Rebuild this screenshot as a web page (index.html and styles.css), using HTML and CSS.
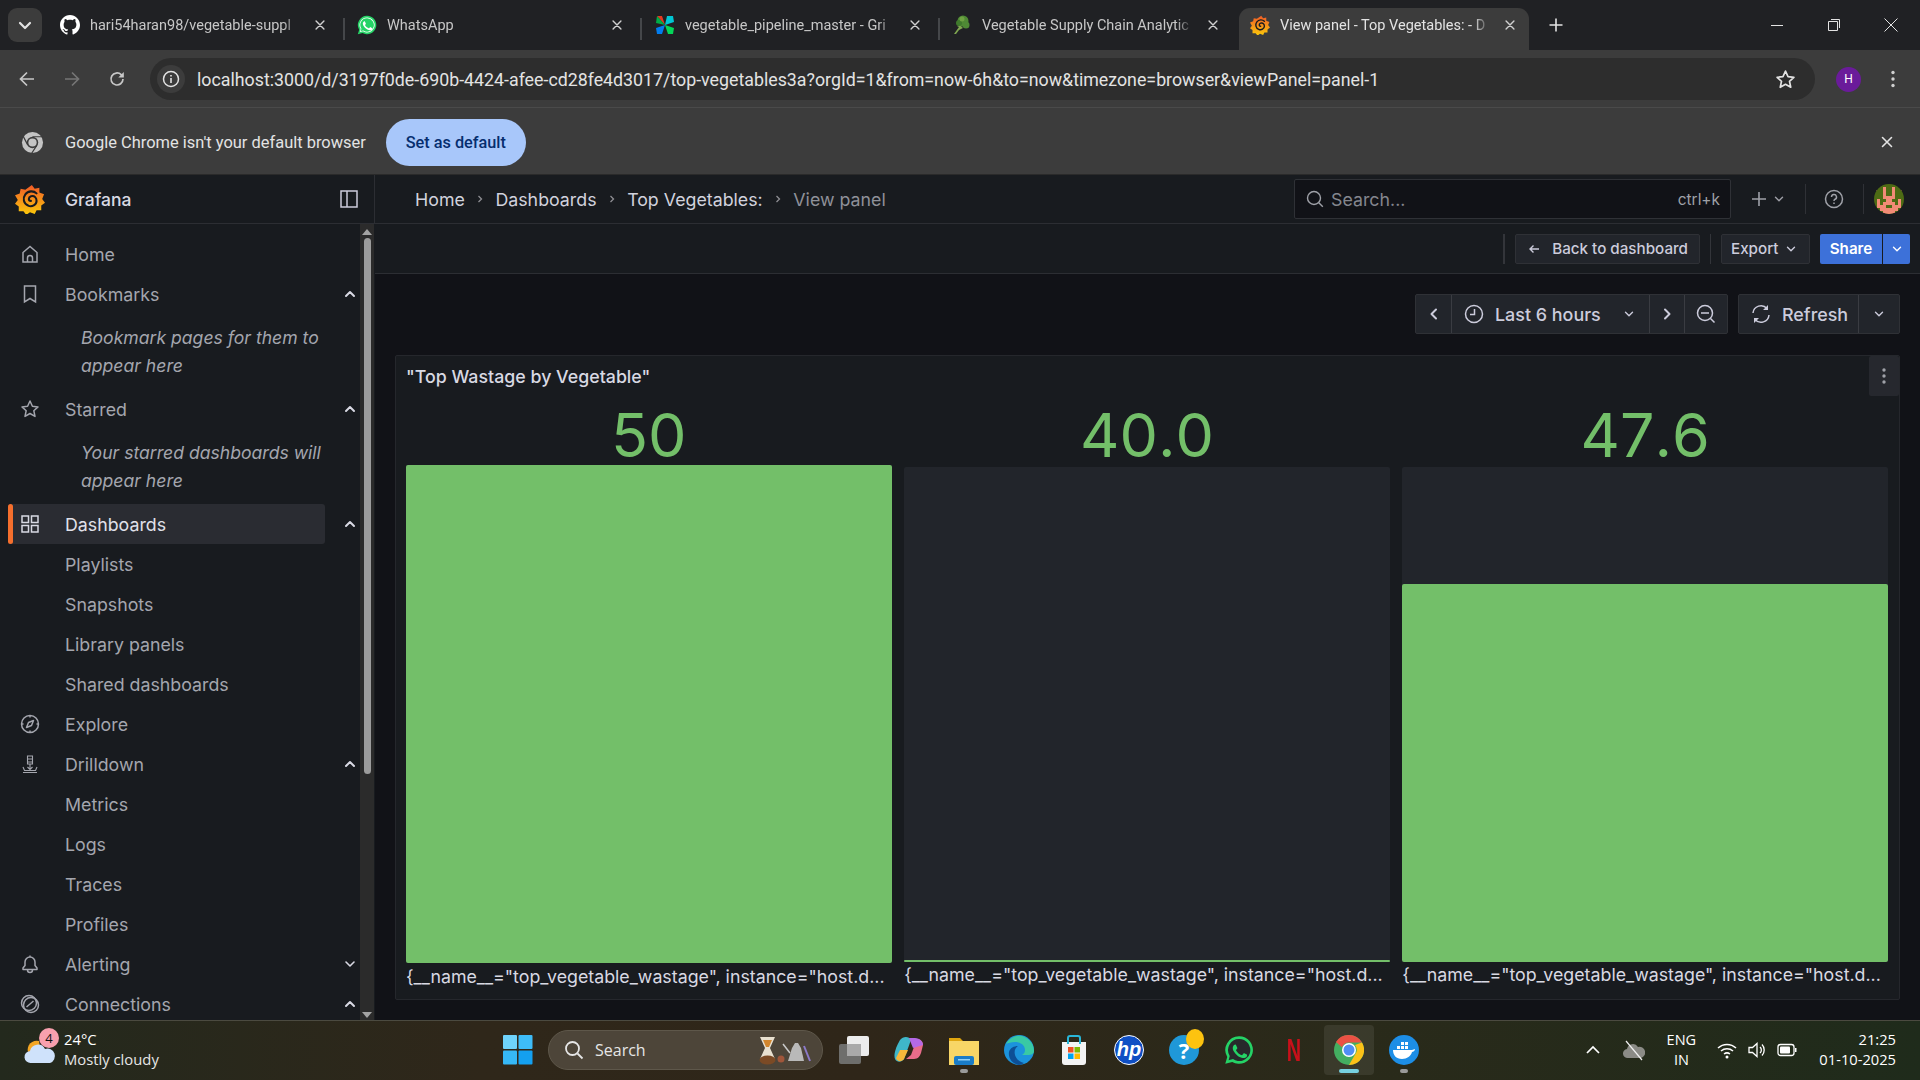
FILE: index.html
```html
<!DOCTYPE html>
<html lang="en">
  <head>
    <meta charset="UTF-8" />
    <title>View panel - Top Vegetables</title>
    <link rel="stylesheet" href="styles.css">
  </head>
  <body>
    <svg class="defs" width="0" height="0">
      <defs>
        <linearGradient id="gf" x1="0" y1="0" x2="0" y2="1">
          <stop offset="0" stop-color="#f05a28" />
          <stop offset="1" stop-color="#fbca0a" />
        </linearGradient>
        <symbol id="grafana" viewBox="0 0 32 32">
          <path fill="url(#gf)" d="M18 1l3 4 5-1 0 5 5 2-2 5 3 4-4 3 0 5-5 0-2 4-5-2-4 3-3-4-5 0 0-5-4-3 3-4-3-5 5-2 1-5 5 1z" />
          <path fill="none" stroke="#181b1f" stroke-width="2.2" stroke-linecap="round" d="M23 10c-3-3-9-3-12 1-3 4-2 10 3 12 4 2 9-1 9-5 0-3-2-6-6-5-3 1-3 5 0 5" />
        </symbol>
        <symbol id="chev-up" viewBox="0 0 16 16">
          <path fill="none" stroke="currentColor" stroke-width="2" stroke-linecap="round" stroke-linejoin="round" d="M4 10l4-4 4 4" />
        </symbol>
        <symbol id="chev-down" viewBox="0 0 16 16">
          <path fill="none" stroke="currentColor" stroke-width="1.6" stroke-linecap="round" stroke-linejoin="round" d="M4 6l4 4 4-4" />
        </symbol>
        <symbol id="x" viewBox="0 0 16 16">
          <path fill="none" stroke="currentColor" stroke-width="1.6" stroke-linecap="round" d="M3.5 3.5l9 9M12.5 3.5l-9 9" />
        </symbol>
      </defs>
    </svg>

    <div class="tabstrip">
      <div class="tab-search">
        <svg class="ic12" viewBox="0 0 16 16"><path fill="none" stroke="#e3e3e3" stroke-width="2.2" stroke-linecap="round" stroke-linejoin="round" d="M3 6l5 5 5-5" /></svg>
      </div>
      <div class="tab tab-github">
        <svg class="favicon" viewBox="0 0 16 16"><path fill="#fff" d="M8 0C3.6 0 0 3.6 0 8c0 3.5 2.3 6.5 5.5 7.6.4.1.5-.2.5-.4v-1.4c-2.2.5-2.7-1-2.7-1-.4-.9-.9-1.2-.9-1.2-.7-.5.1-.5.1-.5.8.1 1.2.8 1.2.8.7 1.2 1.9.9 2.3.7.1-.5.3-.9.5-1.1-1.8-.2-3.6-.9-3.6-4 0-.9.3-1.6.8-2.1-.1-.2-.4-1 .1-2.1 0 0 .7-.2 2.2.8.6-.2 1.3-.3 2-.3s1.4.1 2 .3c1.5-1 2.2-.8 2.2-.8.4 1.1.2 1.9.1 2.1.5.6.8 1.3.8 2.1 0 3.1-1.9 3.7-3.7 3.9.3.3.6.8.6 1.5v2.2c0 .2.1.5.6.4C13.7 14.5 16 11.5 16 8c0-4.4-3.6-8-8-8z" /></svg>
        <span class="tab-title">hari54haran98/vegetable-suppl</span>
        <svg class="tab-close"><use href="#x" /></svg>
      </div>
      <i class="tab-sep"></i>
      <div class="tab tab-whatsapp">
        <svg class="favicon" viewBox="0 0 24 24"><path fill="#25d366" d="M12 1a11 11 0 0 0-9.400 16.600L1 23l5.600-1.500A11 11 0 1 0 12 1z" /><path fill="#fff" d="M12 3a9 9 0 0 0-7.600 13.800l-1 3.700 3.800-1A9 9 0 1 0 12 3z" /><path fill="#25d366" d="M12 4a8 8 0 0 0-6.700 12.400l-.7 2.900 3-.8A8 8 0 1 0 12 4z" /><path fill="#fff" d="M9 7.500c-.3 0-.7.100-1 .5-.4.500-1 1.200-1 2.500s1 2.800 1.200 3c.200.200 2 3.100 4.800 4.200 2.400.900 2.900.700 3.400.700s1.700-.700 1.900-1.400c.200-.600.200-1.200.100-1.300-.300-.200-1.800-1-2.100-1.100-.300-.100-.500-.200-.700.100l-1 1.200c-.200.200-.400.300-.700.100-.300-.200-1.300-.500-2.500-1.500-.900-.800-1.500-1.800-1.700-2.100-.200-.300 0-.500.100-.600l.800-1.100c.100-.200.100-.400 0-.500l-1-2.200c-.200-.500-.500-.500-.8-.500z" /></svg>
        <span class="tab-title">WhatsApp</span>
        <svg class="tab-close"><use href="#x" /></svg>
      </div>
      <i class="tab-sep"></i>
      <div class="tab tab-airflow">
        <svg class="favicon" viewBox="0 0 20 20"><path fill="#e43921" d="M10 10L2 1l5 0z" /><path fill="#00ad46" d="M10 10L2 1 1 8z" /><path fill="#017cee" d="M10 10L2 19l5 0zM10 10l-8 9-1-6z" /><path fill="#00c7d4" d="M10 10l8-9-6 0zM10 10l8-9 1 6z" /><path fill="#04d659" d="M10 10l8 9-5 0zM10 10l8 9 1-6z" /></svg>
        <span class="tab-title">vegetable_pipeline_master - Gri</span>
        <svg class="tab-close"><use href="#x" /></svg>
      </div>
      <i class="tab-sep"></i>
      <div class="tab tab-veg">
        <svg class="favicon" viewBox="0 0 20 20"><path fill="#7fa650" d="M2 19l5-7-2-1 3-1 3 3-4 2-3 4z" /><circle cx="11" cy="6" r="5.500" fill="#4f8a35" /><circle cx="7" cy="8" r="3" fill="#3f7a2c" /><circle cx="14" cy="10" r="3.500" fill="#4f8a35" /><circle cx="10" cy="4" r="2.500" fill="#6ea243" /></svg>
        <span class="tab-title">Vegetable Supply Chain Analytic</span>
        <svg class="tab-close"><use href="#x" /></svg>
      </div>
      <div class="tab tab-active">
        <svg class="favicon"><use href="#grafana" /></svg>
        <span class="tab-title">View panel - Top Vegetables: - D</span>
        <svg class="tab-close"><use href="#x" /></svg>
      </div>
      <svg class="new-tab" viewBox="0 0 16 16"><path fill="none" stroke="#e3e3e3" stroke-width="1.600" d="M8 1.500v13M1.500 8h13" /></svg>
      <div class="window-btns">
        <svg class="win-btn" viewBox="0 0 16 16"><path stroke="#e3e3e3" d="M2 8.500h12" /></svg>
        <svg class="win-btn" viewBox="0 0 16 16"><path fill="none" stroke="#e3e3e3" d="M2.500 4.500h9v9h-9zM5 2.500h8.500v8.500" /></svg>
        <svg class="win-btn" viewBox="0 0 16 16"><path stroke="#e3e3e3" d="M1.500 1.500l13 13M14.500 1.500l-13 13" /></svg>
      </div>
    </div>

    <div class="toolbar">
      <svg class="nav-ic" viewBox="0 0 20 20"><path fill="none" stroke="#c7c7c7" stroke-width="1.700" d="M17 10H4M10 3.500L3.500 10l6.500 6.500" /></svg>
      <svg class="nav-ic" viewBox="0 0 20 20"><path fill="none" stroke="#757575" stroke-width="1.700" d="M3 10h13M10 3.500l6.500 6.500-6.500 6.500" /></svg>
      <svg class="nav-ic" viewBox="0 0 20 20"><path fill="none" stroke="#c7c7c7" stroke-width="1.700" d="M16 10a6 6 0 1 1-1.800-4.300L16 7.500" /><path fill="#c7c7c7" d="M16.800 3v5.500h-5.500z" /></svg>
      <div class="omnibox">
        <span class="site-info">
          <svg class="ic18" viewBox="0 0 18 18"><circle cx="9" cy="9" r="7.500" fill="none" stroke="#e3e3e3" stroke-width="1.500" /><path stroke="#e3e3e3" stroke-width="1.600" d="M9 8v5M9 5v1.600" /></svg>
        </span>
        <span class="url">localhost:3000/d/3197f0de-690b-4424-afee-cd28fe4d3017/top-vegetables3a?orgId=1&amp;from=now-6h&amp;to=now&amp;timezone=browser&amp;viewPanel=panel-1</span>
        <svg class="star" viewBox="0 0 20 20"><path fill="none" stroke="#e3e3e3" stroke-width="1.600" stroke-linejoin="round" d="M10 2l2.400 5.300 5.600.6-4.200 3.800 1.200 5.700-5-2.900-5 2.900 1.200-5.700L2 7.900l5.600-.6z" /></svg>
      </div>
      <span class="profile">H</span>
      <svg class="kebab" viewBox="0 0 4 18"><circle cx="2" cy="2.500" r="1.700" fill="#d0d0d0" /><circle cx="2" cy="9" r="1.700" fill="#d0d0d0" /><circle cx="2" cy="15.500" r="1.700" fill="#d0d0d0" /></svg>
    </div>

    <div class="infobar">
      <svg class="chrome-mono" viewBox="0 0 24 24"><circle cx="12" cy="12" r="11" fill="#c4c4c4" /><circle cx="12" cy="12" r="6" fill="#3c3c3c" /><circle cx="12" cy="12" r="4.300" fill="#c4c4c4" /><path stroke="#3c3c3c" stroke-width="1.300" d="M12 6h10.500M7 14.500L2 5M16.500 15l-5.500 8.500" /></svg>
      <span class="info-text">Google Chrome isn't your default browser</span>
      <span class="set-default">Set as default</span>
      <svg class="info-close"><use href="#x" /></svg>
    </div>

    <div class="app">
      <aside class="sidebar">
        <div class="brand">
          <svg class="logo"><use href="#grafana" /></svg>
          <span class="brand-name">Grafana</span>
          <svg class="dock" viewBox="0 0 18 18"><path fill="none" stroke="#ccccdc" stroke-width="1.500" d="M1 1h16v16H1zM7 1v16" /></svg>
        </div>
        <div class="nav-wrap">
          <nav class="nav">
            <a class="nav-row">
              <svg class="nav-icon" viewBox="0 0 20 20"><path d="M3 18V8.500L10 2.500l7 6V18zM7.500 18v-4a2.500 2.500 0 0 1 5 0v4" /></svg>
              <span>Home</span>
            </a>
            <a class="nav-row">
              <svg class="nav-icon" viewBox="0 0 20 20"><path d="M4.500 2h11v16L10 14.500 4.500 18z" /></svg>
              <span>Bookmarks</span>
              <svg class="nav-chev"><use href="#chev-up" /></svg>
            </a>
            <p class="nav-note">Bookmark pages for them to appear here</p>
            <a class="nav-row">
              <svg class="nav-icon" viewBox="0 0 20 20"><path stroke-linejoin="round" d="M10 2l2.400 5.300 5.600.6-4.200 3.800 1.200 5.700-5-2.900-5 2.900 1.200-5.700L2 7.900l5.600-.6z" /></svg>
              <span>Starred</span>
              <svg class="nav-chev"><use href="#chev-up" /></svg>
            </a>
            <p class="nav-note">Your starred dashboards will appear here</p>
            <a class="nav-row nav-active">
              <svg class="nav-icon" viewBox="0 0 20 20"><path d="M2 2h6.500v6.500H2zM11.500 2H18v6.500h-6.500zM2 11.500h6.500V18H2zM11.500 11.500H18V18h-6.500z" /></svg>
              <span>Dashboards</span>
              <svg class="nav-chev"><use href="#chev-up" /></svg>
            </a>
            <a class="nav-row nav-sub"><span>Playlists</span></a>
            <a class="nav-row nav-sub"><span>Snapshots</span></a>
            <a class="nav-row nav-sub"><span>Library panels</span></a>
            <a class="nav-row nav-sub"><span>Shared dashboards</span></a>
            <a class="nav-row">
              <svg class="nav-icon" viewBox="0 0 20 20"><circle cx="10" cy="10" r="8.500" /><path stroke-linejoin="round" d="M13.500 6.500l-2 5-5 2 2-5z" /><path d="M10 1.500v2M10 16.500v2M1.500 10h2M16.500 10h2" /></svg>
              <span>Explore</span>
            </a>
            <a class="nav-row">
              <svg class="nav-icon nav-icon-thin" viewBox="0 0 20 20"><path d="M7.500 2h5v8h-5zM7.500 5h5M7.500 8h5M10 10v5M7.500 13l2.500 2.500 2.500-2.500M3 13l1.500 3.500h11L17 13M3 18.500h14" /></svg>
              <span>Drilldown</span>
              <svg class="nav-chev"><use href="#chev-up" /></svg>
            </a>
            <a class="nav-row nav-sub"><span>Metrics</span></a>
            <a class="nav-row nav-sub"><span>Logs</span></a>
            <a class="nav-row nav-sub"><span>Traces</span></a>
            <a class="nav-row nav-sub"><span>Profiles</span></a>
            <a class="nav-row">
              <svg class="nav-icon" viewBox="0 0 20 20"><path stroke-linejoin="round" d="M3 15.500h14v-1.500l-2-2.500V8a5 5 0 0 0-10 0v3.500L3 14zM10 3V1.500M7.500 15.500v.5a2.500 2.500 0 0 0 5 0v-.5" /></svg>
              <span>Alerting</span>
              <svg class="nav-chev"><use href="#chev-down" /></svg>
            </a>
            <a class="nav-row">
              <svg class="nav-icon" viewBox="0 0 20 20"><circle cx="9" cy="9" r="7.500" /><circle cx="11" cy="11" r="7.500" /><path d="M6.500 13L13.500 7" /></svg>
              <span>Connections</span>
              <svg class="nav-chev"><use href="#chev-up" /></svg>
            </a>
          </nav>
          <div class="scrollbar">
            <i class="arrow-up"></i>
            <div class="track"><div class="thumb"></div></div>
            <i class="arrow-down"></i>
          </div>
        </div>
      </aside>

      <div class="main">
        <header class="topbar">
          <div class="crumbs">
            <span>Home</span>
            <svg class="crumb-sep" viewBox="0 0 8 12"><path fill="none" stroke="#8e8e93" stroke-width="1.300" d="M2.500 3l3 3-3 3" /></svg>
            <span>Dashboards</span>
            <svg class="crumb-sep" viewBox="0 0 8 12"><path fill="none" stroke="#8e8e93" stroke-width="1.300" d="M2.500 3l3 3-3 3" /></svg>
            <span>Top Vegetables:</span>
            <svg class="crumb-sep" viewBox="0 0 8 12"><path fill="none" stroke="#8e8e93" stroke-width="1.300" d="M2.500 3l3 3-3 3" /></svg>
            <span class="crumb-last">View panel</span>
          </div>
          <div class="search">
            <svg class="ic18" viewBox="0 0 18 18"><circle cx="8" cy="8" r="6.500" fill="none" stroke="#9fa1a8" stroke-width="1.400" /><path stroke="#9fa1a8" stroke-width="1.400" d="M12.800 12.800l4 4" /></svg>
            <span class="search-ph">Search...</span>
            <span class="search-key">ctrl+k</span>
          </div>
          <div class="top-actions">
            <svg class="plus" viewBox="0 0 16 16"><path stroke="#9fa1a8" stroke-width="1.600" d="M8 1v14M1 8h14" /></svg>
            <svg class="small-chev top-chev"><use href="#chev-down" /></svg>
            <i class="top-div"></i>
            <svg class="help" viewBox="0 0 20 20"><circle cx="10" cy="10" r="8.500" fill="none" stroke="#9fa1a8" stroke-width="1.500" /><path fill="none" stroke="#9fa1a8" stroke-width="1.500" d="M7.500 8a2.500 2.500 0 1 1 3.500 2.300c-.7.300-1 .8-1 1.700M10 13.500v1.500" /></svg>
            <i class="top-div"></i>
            <svg class="user" viewBox="0 0 30 30">
              <clipPath id="uc"><circle cx="15" cy="15" r="15" /></clipPath>
              <g clip-path="url(#uc)">
                <rect width="30" height="30" fill="#4d6b14" />
                <path fill="#f28b76" d="M0 4h3v3H0zM27 4h3v3h-3zM9 3h3v9h6V3h3v12h-3v3h3v3h3v6h-3v3H9v-3H6v-6h3v-3h3v-3H9zM12 21v3h6v-3zM3 15h3v9H3zM24 15h3v9h-3z" />
              </g>
            </svg>
          </div>
        </header>

        <div class="actionbar">
          <i class="action-div"></i>
          <span class="btn">
            <svg class="ic14" viewBox="0 0 14 14"><path fill="none" stroke="#ccccdc" stroke-width="1.400" d="M12 7H3M6.500 3.500L3 7l3.500 3.500" /></svg>
            <span class="btn-back">Back to dashboard</span>
          </span>
          <i class="action-div action-div-b"></i>
          <span class="btn btn-export">Export <svg class="small-chev"><use href="#chev-down" /></svg></span>
          <span class="btn-share">Share</span>
          <span class="btn-share-more"><svg class="small-chev"><use href="#chev-down" /></svg></span>
        </div>

        <div class="canvas">
          <div class="time-controls">
            <div class="btn-group">
              <span class="seg seg-arrow"><svg class="ic16" viewBox="0 0 16 16"><path fill="none" stroke="#ccccdc" stroke-width="2" stroke-linecap="round" stroke-linejoin="round" d="M10 3.500L5.500 8l4.500 4.500" /></svg></span>
              <span class="seg seg-time">
                <svg class="ic20" viewBox="0 0 20 20"><circle cx="10" cy="10" r="8.500" fill="none" stroke="#ccccdc" stroke-width="1.500" /><path fill="none" stroke="#ccccdc" stroke-width="1.500" d="M10.500 5v5.500H6" /></svg>
                <span class="seg-label">Last 6 hours</span>
                <svg class="small-chev time-chev"><use href="#chev-down" /></svg>
              </span>
              <span class="seg seg-arrow"><svg class="ic16" viewBox="0 0 16 16"><path fill="none" stroke="#ccccdc" stroke-width="2" stroke-linecap="round" stroke-linejoin="round" d="M6 3.500L10.500 8 6 12.500" /></svg></span>
              <span class="seg seg-zoom"><svg class="ic20" viewBox="0 0 20 20"><circle cx="9" cy="9" r="7.500" fill="none" stroke="#ccccdc" stroke-width="1.500" /><path stroke="#ccccdc" stroke-width="1.500" d="M5 9h8M14.500 14.500l4 4" /></svg></span>
            </div>
            <div class="btn-group">
              <span class="seg seg-refresh">
                <svg class="ic20" viewBox="0 0 20 20"><path fill="none" stroke="#ccccdc" stroke-width="1.500" d="M2 9a8 8 0 0 1 14-4.500M18 11a8 8 0 0 1-14 4.500" /><path fill="#ccccdc" d="M17 1v5h-5zM3 19v-5h5z" /></svg>
                <span class="seg-label">Refresh</span>
              </span>
              <span class="seg seg-more"><svg class="small-chev"><use href="#chev-down" /></svg></span>
            </div>
          </div>

          <section class="panel">
            <div class="panel-head">
              <h2 class="panel-title">"Top Wastage by Vegetable"</h2>
              <span class="panel-menu">
                <svg class="kebab-sm" viewBox="0 0 4 16"><circle cx="2" cy="2" r="1.700" fill="#9fa1a8" /><circle cx="2" cy="8" r="1.700" fill="#9fa1a8" /><circle cx="2" cy="14" r="1.700" fill="#9fa1a8" /></svg>
              </span>
            </div>
            <div class="gauges">
              <div class="gauge gauge-full">
                <div class="gauge-value">50</div>
                <div class="gauge-track"><div class="gauge-fill" style="height: 100%"></div></div>
                <div class="gauge-label">{__name__="top_vegetable_wastage", instance="host.d...</div>
              </div>
              <div class="gauge">
                <div class="gauge-value">40.0</div>
                <div class="gauge-track"><div class="gauge-fill" style="height: 2px"></div></div>
                <div class="gauge-label">{__name__="top_vegetable_wastage", instance="host.d...</div>
              </div>
              <div class="gauge">
                <div class="gauge-value">47.6</div>
                <div class="gauge-track"><div class="gauge-fill" style="height: 76.4%"></div></div>
                <div class="gauge-label">{__name__="top_vegetable_wastage", instance="host.d...</div>
              </div>
            </div>
          </section>
        </div>
      </div>
    </div>

    <footer class="taskbar">
      <div class="weather">
        <svg class="weather-ic" viewBox="0 0 34 30"><path fill="#f4a623" d="M16 6A9 9 0 0 0 5 17l12-4z" /><path fill="#cfe2fb" d="M8 28a6 6 0 0 1-1-12 8 8 0 0 1 15-2 7 7 0 0 1 5 14z" /></svg>
        <span class="weather-badge">4</span>
        <div class="weather-text">
          <span>24°C</span>
          <span>Mostly cloudy</span>
        </div>
      </div>
      <div class="task-center">
        <svg class="tb-win" viewBox="0 0 30 30"><rect width="14" height="14" x="0" y="0" rx="1" fill="#6fd3fb" /><rect width="14" height="14" x="15.500" y="0" rx="1" fill="#3ebcf8" /><rect width="14" height="14" x="0" y="15.500" rx="1" fill="#36b8f6" /><rect width="14" height="14" x="15.500" y="15.500" rx="1" fill="#14a0f0" /></svg>
        <div class="tb-search">
          <svg class="ic20" viewBox="0 0 20 20"><circle cx="8.500" cy="8.500" r="6.500" fill="none" stroke="#e6e6e6" stroke-width="1.800" /><path stroke="#e6e6e6" stroke-width="1.800" d="M13.500 13.500l5 5" /></svg>
          <span class="tb-search-text">Search</span>
          <svg class="coffee" viewBox="0 0 56 30"><path fill="#e8e0d0" d="M2 2h15l-5 11 5 11H2l5-11z" /><path fill="#d2862e" d="M5 5h9l-3 7H8z" /><ellipse cx="9.500" cy="25" rx="8" ry="4.500" fill="#7b4a25" /><circle cx="23" cy="24" r="3.500" fill="#a0563a" /><path fill="#b9b9b9" d="M30 26l4-13 3-5h3l3 5 3 13z" /><path fill="none" stroke="#c9c9c9" stroke-width="1.500" d="M32 18l-7-9" /><path fill="none" stroke="#8c7ac9" stroke-width="2" d="M46 11l6 15" /></svg>
        </div>
        <div class="tb-icons">
          <svg class="tb-ic" viewBox="0 0 30 30"><rect x="0" y="9" width="22" height="20" rx="2" fill="#6e6e6c" /><rect x="8" y="1" width="22" height="20" rx="2" fill="#ececec" /><rect x="8" y="9" width="14" height="12" fill="#a9a9a9" /></svg>
          <svg class="tb-ic" viewBox="0 0 30 30"><path fill="#3fb7c9" d="M6 5c3-4 9-4 11 0l-7 19c-2 3-7 4-9 0-2-5 2-14 5-19z" /><path fill="#e96c8a" d="M12 24h8c4 0 6-3 7-6l2-8c0-3-2-6-6-6l-6 16z" /><path fill="#f7b73a" d="M6 15h8l-4 9c-2 3-7 3-8-1z" /><path fill="#b569e6" d="M15 3h6c5 0 8 4 8 7l-10 3z" /></svg>
          <div class="tb-slot">
            <svg class="tb-ic" viewBox="0 0 30 30"><path fill="#e0a60f" d="M0 3h11l3 3h16v24H0z" /><rect y="6" width="30" height="24" fill="#f8d666" /><rect x="5" y="21" width="20" height="9" rx="2" fill="#1a7cc7" /><rect x="9" y="24" width="12" height="1.500" fill="#8fd0f8" /></svg>
            <i class="tb-dot"></i>
          </div>
          <svg class="tb-ic" viewBox="0 0 30 30"><circle cx="15" cy="15" r="15" fill="#1c93dc" /><path fill="#39c9a4" d="M2 9C6 2 13 0 18 1c7 2 12 8 12 15 0 3-3 4-6 4h-6c2-1 3-3 3-5 0-5-5-8-10-8-4 0-7 1-9 2z" /><path fill="#0d4f96" d="M15 30C8 29 4 23 5 17c1-4 5-6 9-6-3 2-4 5-3 9 1 4 5 7 9 8-2 1-3 2-5 2z" /></svg>
          <svg class="tb-ic" viewBox="0 0 30 30"><path fill="#f3f3f3" d="M3 7h24v20a3 3 0 0 1-3 3H6a3 3 0 0 1-3-3z" /><path fill="none" stroke="#29b6d8" stroke-width="2" d="M9 9V3a2 2 0 0 1 2-2h8a2 2 0 0 1 2 2v6" /><rect x="9" y="12" width="5.500" height="5.500" fill="#f25022" /><rect x="15.500" y="12" width="5.500" height="5.500" fill="#7fba00" /><rect x="9" y="18.500" width="5.500" height="5.500" fill="#00a4ef" /><rect x="15.500" y="18.500" width="5.500" height="5.500" fill="#ffb900" /></svg>
          <span class="tb-hp">hp</span>
          <span class="tb-help">?<i class="tb-help-dot"></i></span>
          <svg class="tb-ic" viewBox="0 0 24 24"><path fill="#25d366" d="M12 1a11 11 0 0 0-9.400 16.600L1 23l5.600-1.500A11 11 0 1 0 12 1z" /><path fill="#27292b" d="M12 3.200a8.800 8.800 0 0 0-7.400 13.500l-.9 3.400 3.500-.9A8.800 8.800 0 1 0 12 3.200z" /><path fill="#25d366" d="M9 7.500c-.3 0-.7.100-1 .5-.4.500-1 1.200-1 2.500s1 2.800 1.200 3c.2.200 2 3.100 4.800 4.200 2.400.9 2.900.7 3.400.7s1.700-.7 1.900-1.400c.2-.6.2-1.200.1-1.300-.3-.2-1.800-1-2.100-1.100-.3-.1-.5-.2-.7.100l-1 1.200c-.2.200-.4.300-.7.100-.3-.2-1.300-.5-2.500-1.500-.9-.8-1.500-1.800-1.700-2.100-.2-.3 0-.5.100-.6l.8-1.100c.1-.2.100-.4 0-.5l-1-2.200c-.2-.5-.5-.5-.8-.5z" /></svg>
          <span class="tb-netflix">N</span>
          <div class="tb-slot tb-slot-on">
            <svg class="tb-ic" viewBox="0 0 30 30"><circle cx="15" cy="15" r="15" fill="#34a853" /><path fill="#ea4335" d="M15 0a15 15 0 0 1 13 7.500H15a7.500 7.500 0 0 0-7 4.800L2 7a15 15 0 0 1 13-7z" /><path fill="#fbbc05" d="M28 7.500A15 15 0 0 1 15 30l6.500-11.200A7.500 7.500 0 0 0 21 10z" /><circle cx="15" cy="15" r="7" fill="#fff" /><circle cx="15" cy="15" r="5.500" fill="#4285f4" /></svg>
            <i class="tb-dot tb-dot-on"></i>
          </div>
          <div class="tb-slot">
            <svg class="tb-ic" viewBox="0 0 30 30"><circle cx="15" cy="15" r="15" fill="#1d8ee6" /><path fill="#fff" d="M4 15h19c1 0 2-1 3-1 0 2-2 3-3 3-1 4-5 7-10 7-6 0-9-4-9-9z" /><path fill="#fff" d="M8 11h3v3H8zM12 11h3v3h-3zM16 11h3v3h-3zM12 7h3v3h-3zM16 7h3v3h-3z" /></svg>
            <i class="tb-dot"></i>
          </div>
        </div>
      </div>
      <div class="tray">
        <svg class="tray-chev" viewBox="0 0 16 16"><path fill="none" stroke="#fff" stroke-width="1.700" d="M2 11l6-6 6 6" /></svg>
        <svg class="tray-cloud" viewBox="0 0 22 22"><path fill="#8b8b86" d="M5 19a4.500 4.500 0 0 1-1-9 6 6 0 0 1 11-2 5.500 5.500 0 0 1 3 11z" /><path stroke="#f0f0f0" stroke-width="1.200" d="M3 2l16 19" /></svg>
        <div class="tray-lang"><span>ENG</span><span>IN</span></div>
        <svg class="tray-ic tray-wifi" viewBox="0 0 20 20"><path fill="none" stroke="#fff" stroke-width="1.500" d="M1 8a13 13 0 0 1 18 0M4 11a9 9 0 0 1 12 0M7 14a5 5 0 0 1 6 0" /><circle cx="10" cy="17" r="1.500" fill="#fff" /></svg>
        <svg class="tray-ic" viewBox="0 0 20 20"><path fill="none" stroke="#fff" stroke-width="1.300" d="M2 7.500h3.500L10 3.500v13l-4.500-4H2zM13 7a4 4 0 0 1 0 6M15 4.500a8 8 0 0 1 0 11" /></svg>
        <svg class="tray-ic" viewBox="0 0 20 20"><rect x="1" y="4.500" width="16" height="11" rx="2.500" fill="none" stroke="#fff" stroke-width="1.300" /><rect x="3" y="6.500" width="10" height="7" rx="1" fill="#fff" /><rect x="18" y="8" width="1.500" height="4" fill="#fff" /></svg>
        <div class="clock"><span>21:25</span><span>01-10-2025</span></div>
      </div>
    </footer>
  </body>
</html>
```

FILE: styles.css
```css
* {
  box-sizing: border-box;
}

body {
  margin: 0;
  height: 100vh;
  display: flex;
  flex-direction: column;
  overflow: hidden;
  font-family: 'Inter', 'Liberation Sans', sans-serif;
  background: #111217;
  color: #ccccdc;
}

svg {
  display: block;
  flex-shrink: 0;
}

.defs {
  position: absolute;
}

.ic12 { width: 16px; height: 16px; }
.ic14 { width: 14px; height: 14px; }
.ic16 { width: 16px; height: 16px; }
.ic18 { width: 18px; height: 18px; }
.ic20 { width: 20px; height: 20px; }

/* browser chrome */
.tabstrip {
  height: 50px;
  flex-shrink: 0;
  background: #202124;
  display: flex;
  align-items: flex-end;
  padding-left: 8px;
  font-family: 'Roboto', 'Liberation Sans', sans-serif;
}

.tab-search {
  width: 34px;
  height: 34px;
  margin-bottom: 8px;
  background: #3c3c3c;
  border-radius: 9px;
  display: flex;
  align-items: center;
  justify-content: center;
}

.tab {
  height: 42px;
  display: flex;
  align-items: center;
  padding-bottom: 8px;
  color: #c7c7c7;
  font-size: 14.5px;
}

.tab-github { width: 301px; padding-left: 18px; }
.tab-whatsapp { width: 295px; padding-left: 12px; }
.tab-airflow { width: 296px; padding-left: 13px; }
.tab-veg { width: 296px; padding-left: 12px; }

.tab-active {
  width: 290px;
  padding-left: 11px;
  margin-left: 3px;
  background: #3c3c3c;
  border-radius: 11px 11px 0 0;
  color: #e3e3e3;
}

.favicon {
  width: 20px;
  height: 20px;
}

.tab-title {
  flex: 1;
  min-width: 0;
  margin-left: 10px;
  white-space: nowrap;
  overflow: hidden;
  -webkit-mask-image: linear-gradient(to right, #000 92%, transparent);
  mask-image: linear-gradient(to right, #000 92%, transparent);
}

.tab-close {
  width: 14px;
  height: 14px;
  margin: 0 16px 0 13px;
  color: #d0d0d0;
}

.tab-active .tab-close {
  margin-right: 12px;
}

.tab-sep {
  width: 2px;
  height: 22px;
  margin-bottom: 10px;
  background: #45474a;
  flex-shrink: 0;
}

.new-tab {
  width: 16px;
  height: 16px;
  margin: 0 0 17px 19px;
}

.window-btns {
  margin-left: auto;
  display: flex;
  gap: 41px;
  padding-right: 21px;
  margin-bottom: 17px;
}

.win-btn {
  width: 16px;
  height: 16px;
}

.toolbar {
  height: 58px;
  flex-shrink: 0;
  background: #3c3c3c;
  border-bottom: 1px solid #4a4a4a;
  display: flex;
  align-items: center;
  padding: 1px 0 0 17px;
  font-family: 'Roboto', 'Liberation Sans', sans-serif;
}

.nav-ic {
  width: 20px;
  height: 20px;
  margin-right: 25px;
}

.omnibox {
  width: 1665px;
  height: 42px;
  margin-left: -2px;
  background: #2d2d2d;
  border-radius: 21px;
  display: flex;
  align-items: center;
  padding: 0 19px 0 7px;
}

.site-info {
  width: 28px;
  height: 28px;
  border-radius: 50%;
  background: #3c3c3c;
  display: flex;
  align-items: center;
  justify-content: center;
}

.url {
  margin-left: 12px;
  color: #e3e3e3;
  font-size: 17.8px;
  white-space: nowrap;
}

.star {
  width: 21px;
  height: 21px;
  margin-left: auto;
}

.profile {
  width: 25px;
  height: 25px;
  margin-left: 21px;
  border-radius: 50%;
  background: #6a1b9a;
  color: #fff;
  font-size: 12px;
  display: flex;
  align-items: center;
  justify-content: center;
}

.kebab {
  width: 4px;
  height: 18px;
  margin-left: 30px;
}

.infobar {
  height: 67px;
  flex-shrink: 0;
  background: #3c3c3c;
  border-bottom: 1px solid #2a2a2a;
  display: flex;
  align-items: center;
  padding: 2px 0 0 21px;
  font-family: 'Roboto', 'Liberation Sans', sans-serif;
}

.chrome-mono {
  width: 23px;
  height: 23px;
}

.info-text {
  margin-left: 21px;
  font-size: 16.45px;
  color: #e3e3e3;
}

.set-default {
  width: 140px;
  height: 47px;
  margin-left: 20px;
  border-radius: 24px;
  background: #a8c7fa;
  color: #062e6f;
  font-size: 16.3px;
  font-weight: 500;
  display: flex;
  align-items: center;
  justify-content: center;
}

.info-close {
  width: 16px;
  height: 16px;
  margin-left: auto;
  margin-right: 25px;
  color: #e3e3e3;
}

/* grafana */
.app {
  flex: 1;
  min-height: 0;
  display: flex;
}

.sidebar {
  width: 375px;
  flex-shrink: 0;
  display: flex;
  flex-direction: column;
  background: #181b1f;
}

.brand {
  height: 49px;
  flex-shrink: 0;
  display: flex;
  align-items: center;
  padding-left: 15px;
  border-bottom: 1px solid #2c2e33;
  border-right: 1px solid #2c2e33;
}

.logo {
  width: 30px;
  height: 30px;
}

.brand-name {
  margin-left: 20px;
  font-size: 17.5px;
  font-weight: 500;
  color: #d8d9e3;
}

.dock {
  width: 18px;
  height: 18px;
  margin-left: auto;
  margin-right: 16px;
}

.nav-wrap {
  flex: 1;
  min-height: 0;
  display: flex;
}

.nav {
  flex: 1;
  min-width: 0;
  padding-top: 10px;
  overflow: hidden;
}

.nav-row {
  position: relative;
  height: 40px;
  margin-left: 8px;
  width: 317px;
  display: flex;
  align-items: center;
  color: #a4a6ae;
  font-size: 17.8px;
}

.nav-row span {
  margin-left: 57px;
}

.nav-icon {
  position: absolute;
  left: 12px;
  top: 10px;
  width: 20px;
  height: 20px;
  fill: none;
  stroke: #a4a6ae;
  stroke-width: 1.500;
}

.nav-icon-thin {
  stroke-width: 1.100;
}

.nav-chev {
  position: absolute;
  left: 334px;
  top: 12px;
  width: 16px;
  height: 16px;
  color: #d8d9e3;
}

.nav-active {
  background: #2a2c32;
  border-radius: 3px;
  color: #e0e1ea;
}

.nav-active::before {
  content: '';
  position: absolute;
  left: 0;
  top: 0;
  bottom: 0;
  width: 5px;
  border-radius: 3px;
  background: #f56f2d;
}

.nav-active .nav-icon {
  stroke: #d8d9e3;
}

.nav-note {
  margin: 10px 30px 9px 81px;
  font-size: 17.6px;
  line-height: 28px;
  font-style: italic;
  color: #a4a6ae;
}

.scrollbar {
  width: 14px;
  flex-shrink: 0;
  background: #2b2b2b;
  display: flex;
  flex-direction: column;
  align-items: center;
  padding: 5px 0 2px;
  margin-right: 1px;
}

.arrow-up,
.arrow-down {
  width: 0;
  height: 0;
  border-left: 5px solid transparent;
  border-right: 5px solid transparent;
}

.arrow-up { border-bottom: 6px solid #a3a3a3; }
.arrow-down { border-top: 6px solid #a3a3a3; }

.track {
  flex: 1;
  width: 7px;
  padding-top: 3px;
}

.thumb {
  height: 536px;
  border-radius: 4px;
  background: #9c9c9c;
}

.main {
  flex: 1;
  min-width: 0;
  display: flex;
  flex-direction: column;
}

.topbar {
  height: 49px;
  flex-shrink: 0;
  display: flex;
  align-items: center;
  padding-left: 40px;
  background: #181b1f;
  border-bottom: 1px solid #2c2e33;
}

.crumbs {
  display: flex;
  align-items: center;
  font-size: 17.8px;
  color: #d1d2dd;
}

.crumb-sep {
  width: 8px;
  height: 12px;
  margin: 0 11.3px;
}

.crumb-last {
  color: #8f9199;
}

.search {
  width: 437px;
  height: 40px;
  margin-left: auto;
  display: flex;
  align-items: center;
  padding: 0 10px 0 11px;
  background: #111217;
  border: 1px solid #2f3136;
  border-radius: 2px;
  font-size: 17.8px;
  color: #84868e;
}

.search-ph {
  margin-left: 7px;
}

.search-key {
  margin-left: auto;
  font-size: 15.4px;
  color: #9fa1a8;
}

.top-actions {
  display: flex;
  align-items: center;
  padding: 0 16px 0 20px;
}

.plus {
  width: 16px;
  height: 16px;
}

.small-chev {
  width: 14px;
  height: 14px;
}

.top-chev {
  margin-left: 5px;
  color: #9fa1a8;
}

.top-div {
  width: 1px;
  height: 30px;
  background: #2f3136;
  margin: 0 18px 0 19px;
}

.help {
  width: 20px;
  height: 20px;
}

.user {
  width: 30px;
  height: 30px;
  margin-left: -8px;
}

.actionbar {
  height: 50px;
  flex-shrink: 0;
  display: flex;
  align-items: center;
  justify-content: flex-end;
  padding-right: 10px;
  background: #181b1f;
  border-bottom: 1px solid #2c2e33;
  font-size: 15.2px;
  font-weight: 500;
}

.action-div {
  width: 2px;
  height: 30px;
  background: #33353a;
  margin-right: 10px;
}

.action-div-b {
  width: 1px;
  margin: 0 10px;
}

.btn {
  height: 30px;
  display: flex;
  align-items: center;
  padding: 0 11px;
  background: #22252b;
  border: 1px solid #2f3136;
  border-radius: 2px;
}

.btn-back {
  margin-left: 11px;
  white-space: nowrap;
}

.btn-export {
  width: 89px;
  padding: 0 0 0 9px;
  gap: 6px;
  margin-right: 10px;
}

.btn-share {
  width: 62px;
  height: 30px;
  margin-right: 1px;
  background: #3d71d9;
  border-radius: 2px 0 0 2px;
  color: #fff;
  font-weight: 600;
  display: flex;
  align-items: center;
  justify-content: center;
}

.btn-share-more {
  width: 27px;
  height: 30px;
  background: #3d71d9;
  border-radius: 0 2px 2px 0;
  color: #fff;
  display: flex;
  align-items: center;
  justify-content: center;
}

.canvas {
  flex: 1;
  min-height: 0;
  display: flex;
  flex-direction: column;
  padding: 20px;
}

.time-controls {
  height: 40px;
  flex-shrink: 0;
  display: flex;
  justify-content: flex-end;
  gap: 10px;
}

.btn-group {
  display: flex;
  background: #22252b;
  border: 1px solid #2f3136;
  border-radius: 2px;
  font-size: 17.9px;
  font-weight: 500;
}

.seg {
  display: flex;
  align-items: center;
  justify-content: center;
  border-left: 1px solid #3a3c42;
}

.seg:first-child {
  border-left: 0;
}

.seg-arrow { width: 35px; }
.seg-zoom { width: 43px; }
.seg-time { width: 198px; justify-content: flex-start; padding-left: 12px; }
.seg-refresh { width: 119px; justify-content: flex-start; padding-left: 12px; }
.seg-more { width: 41px; }

.seg-label {
  margin-left: 11px;
}

.time-chev {
  margin-left: auto;
  margin-right: 13px;
}

.panel {
  flex: 1;
  min-height: 0;
  margin-top: 21px;
  display: flex;
  flex-direction: column;
  background: #181b1f;
  border: 1px solid #25272c;
  border-radius: 2px;
}

.panel-head {
  height: 40px;
  flex-shrink: 0;
  display: flex;
  justify-content: space-between;
  padding-left: 10px;
}

.panel-title {
  margin: 1px 0 0;
  align-self: center;
  font-size: 17.8px;
  font-weight: 500;
  color: #d8d9e3;
}

.panel-menu {
  width: 30px;
  height: 40px;
  background: #26282e;
  border-radius: 2px;
  display: flex;
  align-items: center;
  justify-content: center;
}

.kebab-sm {
  width: 4px;
  height: 16px;
}

.gauges {
  flex: 1;
  min-height: 0;
  display: grid;
  grid-template-columns: repeat(3, 1fr);
  gap: 12.5px;
  padding: 0 11px 0 10px;
}

.gauge {
  display: flex;
  flex-direction: column;
  min-width: 0;
}

.gauge-value {
  height: 71px;
  flex-shrink: 0;
  font-size: 61px;
  font-kerning: none;
  line-height: 79px;
  text-align: center;
  color: #73bf69;
}

.gauge-full .gauge-value {
  height: 69px;
}

.gauge-track {
  flex: 1;
  min-height: 0;
  display: flex;
  align-items: flex-end;
  background: #22252b;
  border-radius: 2px;
}

.gauge-fill {
  width: 100%;
  background: #73bf69;
  border-radius: 2px;
}

.gauge-label {
  height: 28px;
  flex-shrink: 0;
  margin-bottom: 9px;
  line-height: 26px;
  font-size: 17.8px;
  white-space: nowrap;
  overflow: hidden;
  color: #d8d9e3;
}

.gauge-full .gauge-label {
  height: 27px;
  line-height: 28px;
}

/* windows taskbar */
.taskbar {
  height: 60px;
  flex-shrink: 0;
  display: flex;
  align-items: center;
  padding-bottom: 2px;
  background: linear-gradient(90deg, #23291d 0%, #2f271a 25%, #2f2619 45%, #2a2a1a 70%, #1f2b1b 100%);
  border-top: 1px solid #4b4a40;
  font-family: 'Open Sans', 'Liberation Sans', sans-serif;
  color: #fff;
}

.weather {
  position: relative;
  width: 503px;
  flex-shrink: 0;
  display: flex;
  align-items: center;
  padding-left: 23px;
}

.weather-ic {
  width: 34px;
  height: 30px;
}

.weather-badge {
  position: absolute;
  left: 39px;
  top: -2px;
  width: 20px;
  height: 20px;
  border-radius: 50%;
  background: #f8a0ae;
  color: #111;
  font-size: 13px;
  text-align: center;
  line-height: 20px;
}

.weather-text {
  margin-left: 7px;
  display: flex;
  flex-direction: column;
  font-size: 14.8px;
  line-height: 19.5px;
}

.weather-text span:last-child {
  color: #e6e6e6;
}

.task-center {
  display: flex;
  align-items: center;
}

.tb-win {
  width: 30px;
  height: 30px;
}

.tb-search {
  width: 275px;
  height: 40px;
  margin-left: 15px;
  padding: 0 8px 0 15px;
  display: flex;
  align-items: center;
  background: #4d4539;
  border: 1px solid #5e574a;
  border-radius: 20px;
  font-size: 16px;
  color: #e6e6e6;
}

.tb-search-text {
  margin-left: 11px;
}

.coffee {
  width: 56px;
  height: 30px;
  margin-left: auto;
}

.tb-icons {
  display: flex;
  align-items: center;
  gap: 25px;
  margin-left: 16px;
}

.tb-ic {
  width: 30px;
  height: 30px;
}

.tb-slot {
  position: relative;
}

.tb-slot-on::before {
  content: '';
  position: absolute;
  left: -10px;
  top: -10px;
  width: 50px;
  height: 50px;
  background: rgba(255, 255, 255, 0.08);
  border-radius: 4px;
}

.tb-dot {
  position: absolute;
  left: 11px;
  bottom: -8px;
  width: 8px;
  height: 4px;
  border-radius: 2px;
  background: #9a9a9a;
}

.tb-dot-on {
  left: 5px;
  width: 20px;
  background: #76d0e0;
}

.tb-hp {
  width: 30px;
  height: 30px;
  border-radius: 50%;
  background: #0f4fc4;
  border: 1px solid #fff;
  color: #fff;
  font-family: 'Liberation Sans', sans-serif;
  font-size: 20px;
  font-style: italic;
  font-weight: 700;
  line-height: 27px;
  text-align: center;
}

.tb-help {
  position: relative;
  width: 30px;
  height: 30px;
  border-radius: 50%;
  background: #1f98d8;
  color: #fff;
  font-size: 22px;
  font-weight: 700;
  line-height: 30px;
  text-align: center;
}

.tb-help-dot {
  position: absolute;
  left: 17px;
  top: -6px;
  width: 18px;
  height: 20px;
  border-radius: 50%;
  background: #fdc30f;
}

.tb-netflix {
  width: 30px;
  color: #c8101a;
  font-family: 'Liberation Sans', sans-serif;
  font-size: 32px;
  font-weight: 700;
  line-height: 30px;
  text-align: center;
  transform: scaleX(0.62);
}

.tray {
  margin-left: auto;
  display: flex;
  align-items: center;
  padding-right: 24px;
}

.tray-chev {
  width: 16px;
  height: 16px;
}

.tray-cloud {
  width: 22px;
  height: 22px;
  margin-left: 22px;
}

.tray-lang {
  width: 48px;
  margin-left: 12px;
  display: flex;
  flex-direction: column;
  align-items: center;
  font-size: 14.5px;
  line-height: 20px;
}

.tray-ic {
  width: 20px;
  height: 20px;
  margin-left: 10px;
}

.tray-wifi {
  margin-left: 12px;
}

.clock {
  margin-left: 22px;
  display: flex;
  flex-direction: column;
  align-items: flex-end;
  font-size: 14.7px;
  line-height: 19.5px;
}
```
